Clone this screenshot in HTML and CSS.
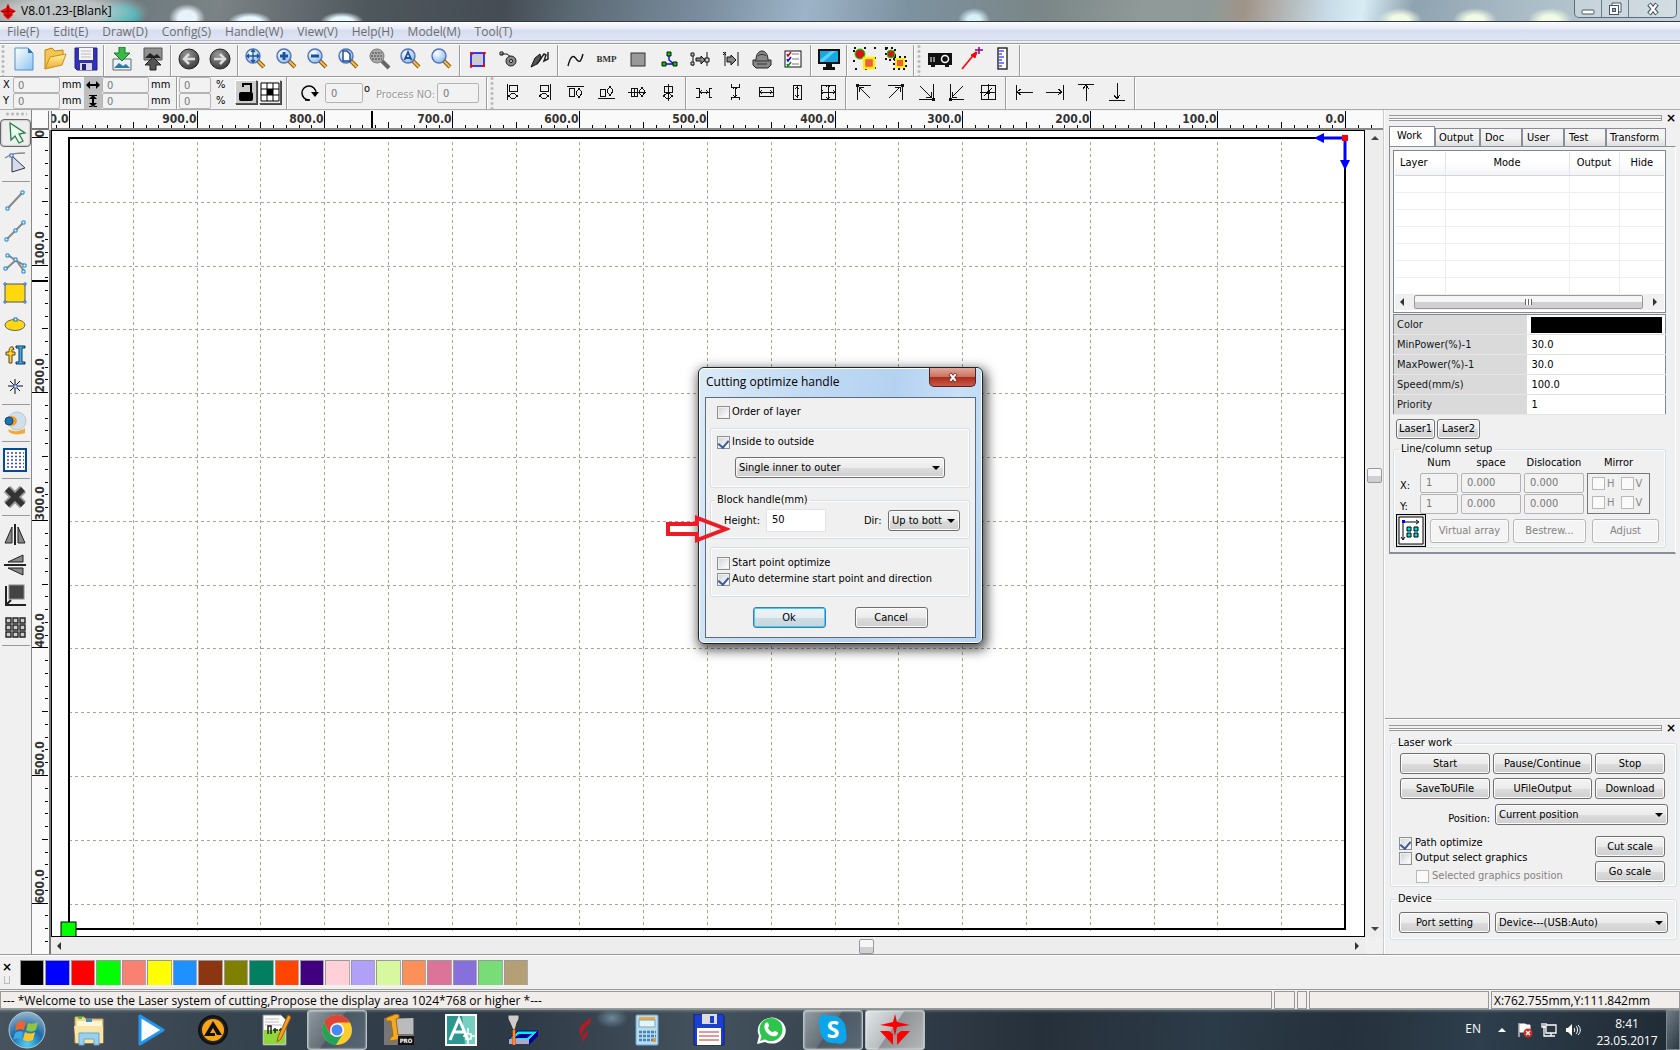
FILE: index.html
```html
<!DOCTYPE html>
<html lang="en">
<head>
<meta charset="utf-8">
<title>V8.01.23-[Blank]</title>
<link rel="stylesheet" href="styles.css">
</head>
<body>
<svg class="defs" aria-hidden="true">
  <defs>
    <radialGradient id="lens" cx=".35" cy=".3" r=".8"><stop offset="0" stop-color="#fff"/><stop offset=".6" stop-color="#b5d4f3"/><stop offset="1" stop-color="#7fb2e6"/></radialGradient>
    <linearGradient id="doc" x1="0" y1="0" x2="1" y2="1"><stop offset="0" stop-color="#fff"/><stop offset="1" stop-color="#8cc4f0"/></linearGradient>
    <linearGradient id="gold" x1="0" y1="0" x2="0" y2="1"><stop offset="0" stop-color="#fff0a0"/><stop offset="1" stop-color="#f0ae2c"/></linearGradient>
    <radialGradient id="orb" cx=".5" cy=".9" r=".9"><stop offset="0" stop-color="#4fd0f8"/><stop offset=".5" stop-color="#1b6aa8"/><stop offset="1" stop-color="#97b6cc"/></radialGradient>
    <radialGradient id="dot" cx=".4" cy=".3" r=".7"><stop offset="0" stop-color="#999"/><stop offset="1" stop-color="#3c3c3c"/></radialGradient>
    <symbol id="mag" viewBox="0 0 24 24"><path d="M13 13l7 7" stroke="#8a5a1c" stroke-width="4"/><path d="M14 14l6 6" stroke="#f6bd45" stroke-width="2"/><circle cx="9" cy="9" r="7" fill="url(#lens)" stroke="#5273b4" stroke-width="1.4"/></symbol>
    <symbol id="laser" viewBox="0 0 32 32"><path d="M16 0l2 8 13 3-13 2-2 9-2-9-13-2 13-3zM1 17h9l4 3v11zM31 17h-9l-4 3v11z" fill="#f00"/></symbol>
  </defs>
</svg>

<header class="titlebar">
  <svg class="logo" viewBox="0 0 32 32"><path d="M16 0l4 9 12 6-7 5v4l-9 8-9-8v-4l-7-5 12-6z" fill="#f00"/><path d="M3 16h26M16 4v24M9 20l6 6M23 20l-6 6" stroke="#400" stroke-width="1.6"/></svg>
  <h1>V8.01.23-[Blank]</h1>
  <div class="winbtns">
    <button aria-label="Minimize"><svg viewBox="0 0 14 14"><rect x="1" y="8" width="12" height="4" rx="1" fill="#fff" stroke="#4a5462"/></svg></button>
    <button aria-label="Restore"><svg viewBox="0 0 14 14"><path d="M4 3V1h9v9h-2" fill="#fff" stroke="#4a5462"/><rect x="1.500" y="3.500" width="9" height="9" fill="#fff" stroke="#4a5462"/><rect x="4.500" y="6.500" width="3" height="3" fill="#9ab" stroke="#4a5462"/></svg></button>
    <button class="wide" aria-label="Close"><svg viewBox="0 0 14 14"><path d="M3 2l8 10M11 2L3 12" stroke="#4a5462" stroke-width="4.600"/><path d="M3.500 2.600l7 8.800M10.500 2.600l-7 8.800" stroke="#fff" stroke-width="2.400"/></svg></button>
  </div>
</header>

<nav class="menubar">
  <a href="#">File(F)</a><a href="#">Edit(E)</a><a href="#">Draw(D)</a><a href="#">Config(S)</a><a href="#">Handle(W)</a><a href="#">View(V)</a><a href="#">Help(H)</a><a href="#">Model(M)</a><a href="#">Tool(T)</a>
</nav>

<div class="toolbar">
  <i class="grip"></i>
  <button aria-label="New"><svg viewBox="0 0 24 24"><path d="M3 1h13l5 5v17H3z" fill="url(#doc)" stroke="#4c8fd0"/><path d="M16 1v5h5z" fill="#2477c8"/></svg></button>
  <button aria-label="Open"><svg viewBox="0 0 24 24"><path d="M2 22V3l7-2 3 3 8-1v5" fill="#f4c650" stroke="#b98416"/><path d="M2 22L7 10l16-3-4 11z" fill="url(#gold)" stroke="#c8901c"/></svg></button>
  <button aria-label="Save"><svg viewBox="0 0 24 24"><path d="M1 1h22v22H3l-2-2z" fill="#3232b4" stroke="#20208a"/><rect x="5" y="1" width="14" height="12" fill="#f4f4fa"/><path d="M7 4h10M7 7h10M7 10h10" stroke="#bbb"/><rect x="6" y="16" width="12" height="7" fill="#d6d6e6"/><rect x="8" y="17" width="4" height="6" fill="#22226e"/></svg></button>
  <i class="sep"></i>
  <button aria-label="Import"><svg viewBox="0 0 24 24"><path d="M3 12h18v11H3z" fill="#e8f2fa" stroke="#666"/><path d="M4 21l5-5 4 3 3-2 4 4z" fill="#2f78a8"/><path d="M9 0h6v6h5l-8 8-8-8h5z" fill="#3cb84a" stroke="#157a26"/></svg></button>
  <button aria-label="Export"><svg viewBox="0 0 24 24"><path d="M3 1h18v12H3z" fill="#909090" stroke="#555"/><path d="M4 11l5-5 4 3 3-2 4 4z" fill="#222"/><path d="M9 23h6v-5h5l-8-8-8 8h5z" fill="#555" stroke="#222"/></svg></button>
  <i class="sep"></i>
  <button aria-label="Back"><svg viewBox="0 0 24 24"><circle cx="12" cy="12" r="10" fill="url(#dot)" stroke="#222"/><path d="M18 12H7m5-5l-5 5 5 5" fill="none" stroke="#ddd" stroke-width="2.500"/></svg></button>
  <button aria-label="Forward"><svg viewBox="0 0 24 24"><circle cx="12" cy="12" r="10" fill="url(#dot)" stroke="#222"/><path d="M6 12h11m-5-5l5 5-5 5" fill="none" stroke="#ddd" stroke-width="2.500"/></svg></button>
  <i class="sep"></i>
  <button aria-label="Pan"><svg viewBox="0 0 24 24"><use href="#mag"/><path d="M9 3v12M3 9h12M7 5l2-2 2 2M7 13l2 2 2-2M5 7L3 9l2 2M13 7l2 2-2 2" fill="none" stroke="#1c4f9c" stroke-width="1.300"/></svg></button>
  <button aria-label="Zoom in"><svg viewBox="0 0 24 24"><use href="#mag"/><path d="M9 5v8M5 9h8" stroke="#1c4f9c" stroke-width="3"/></svg></button>
  <button aria-label="Zoom out"><svg viewBox="0 0 24 24"><use href="#mag"/><path d="M5 9h8" stroke="#1c4f9c" stroke-width="3"/></svg></button>
  <button aria-label="Zoom page"><svg viewBox="0 0 24 24"><use href="#mag"/><path d="M6 4h4l3 3v7H6z" fill="#fff" stroke="#1c4f9c" stroke-width="1.500"/></svg></button>
  <button aria-label="Zoom table"><svg viewBox="0 0 24 24"><path d="M14 14l7 7" stroke="#666" stroke-width="4"/><circle cx="9" cy="9" r="7" fill="#aaa" stroke="#777"/><path d="M4 6h10M3 9h12M4 12h10" stroke="#444" stroke-dasharray="2 1"/></svg></button>
  <button aria-label="Zoom all"><svg viewBox="0 0 24 24"><use href="#mag"/><path d="M5.500 13L9 5l3.500 8M7 11h4" fill="none" stroke="#1c4f9c" stroke-width="1.800"/></svg></button>
  <button aria-label="Zoom selection"><svg viewBox="0 0 24 24"><use href="#mag"/></svg></button>
  <i class="sep"></i>
  <button aria-label="Group"><svg viewBox="0 0 24 24"><rect x="5" y="6" width="13" height="13" fill="#ccc" stroke="#00f" stroke-width="1.500"/><path d="M4 7h3M5 5v3M17 6h3M18 5v3M5 17v4M4 19h3M18 17v3M16 19h3" stroke="#f00" stroke-width="1.500"/></svg></button>
  <button aria-label="Lead in"><svg viewBox="0 0 24 24"><path d="M4 7h6l4 3" stroke="#111" fill="none"/><path d="M3 5h3v3H3z" fill="none" stroke="#111"/><circle cx="14" cy="14" r="5" fill="#888" stroke="#222"/><circle cx="14" cy="14" r="1.500" fill="#eee" stroke="#111"/></svg></button>
  <button aria-label="Measure"><svg viewBox="0 0 24 24"><path d="M3 20l4-9 5-4 1 5-4 5z" fill="#555" stroke="#111"/><path d="M9 17l7-10 2 1-2 6 4-2V5" fill="none" stroke="#222" stroke-width="1.500"/></svg></button>
  <i class="sep"></i>
  <button aria-label="Smooth"><svg viewBox="0 0 24 24"><path d="M4 19c3-12 6-11 9-6 3 3 4 1 6-6" fill="none" stroke="#111" stroke-width="1.400"/></svg></button>
  <button aria-label="Bitmap"><span class="bmp">BMP</span></button>
  <button aria-label="Fill"><svg viewBox="0 0 24 24"><rect x="5" y="6" width="14" height="13" fill="#999" stroke="#333"/></svg></button>
  <button aria-label="Join"><svg viewBox="0 0 24 24"><path d="M12 8v5l5 4H7" fill="none" stroke="#00f" stroke-width="1.400"/><path d="M10 5h4v4h-4zM5 15h4v4H5zM16 15h4v4h-4z" fill="#0c0" stroke="#111"/></svg></button>
  <button aria-label="Gap"><svg viewBox="0 0 24 24"><path d="M5 7v12M19 5v14M9 12h10" stroke="#111"/><path d="M3 6h3v3H3zM3 15h3v3H3zM17 11h4v4h-4z" fill="#ccc" stroke="#111"/><path d="M8 11h5V9l4 4-4 4v-3H8z" fill="#888" stroke="#111"/></svg></button>
  <button aria-label="Offset"><svg viewBox="0 0 24 24"><path d="M6 5v14M19 5v14" stroke="#111"/><path d="M4 5l3 3M7 5L4 8" stroke="#111"/><path d="M8 10h4V8l5 5-5 5v-3H8z" fill="#888" stroke="#111"/></svg></button>
  <button aria-label="Simulate"><svg viewBox="0 0 24 24"><path d="M6 13c0-12 12-12 12 0h3v5l-3 3H6l-3-3v-5z" fill="#888" stroke="#222"/><path d="M8 9c2-2 6-2 8 0M5 14h14M7 17h10" stroke="#333" fill="none"/></svg></button>
  <button aria-label="Checklist"><svg viewBox="0 0 24 24"><rect x="4" y="4" width="16" height="16" fill="#fff" stroke="#111"/><path d="M11 7h7M11 12h7M11 17h7" stroke="#777"/><path d="M6 7l1 2 3-4" stroke="#c00" fill="none" stroke-width="1.500"/><path d="M6 12l1 2 3-4" stroke="#00f" fill="none" stroke-width="1.500"/><path d="M6 17l1 2 3-4" stroke="#080" fill="none" stroke-width="1.500"/></svg></button>
  <i class="sep"></i>
  <button aria-label="Preview"><svg viewBox="0 0 24 24"><path d="M1 2h22v15H1zM9 17h6v3h3v3H6v-3h3z" fill="#111"/><rect x="3" y="4" width="18" height="11" fill="#18a8e0"/><path d="M3 13L14 4h5L6 15H3z" fill="#5cd0f4"/></svg></button>
  <i class="sep"></i>
  <button aria-label="Group objects"><svg viewBox="0 0 24 24"><path d="M1 1h21v21H1z" fill="none" stroke="#111" stroke-width="2" stroke-dasharray="2 8"/><circle cx="7" cy="7" r="5" fill="#d01818" stroke="#0d0"/><rect x="11" y="11" width="10" height="10" fill="#f25a4a" stroke="#fe0" stroke-width="2.500"/></svg></button>
  <button aria-label="Ungroup objects"><svg viewBox="0 0 24 24"><path d="M2 1h9v12H2zM10 10h12v12H10z" fill="none" stroke="#111" stroke-width="2" stroke-dasharray="2 3"/><circle cx="7" cy="7" r="4" fill="#d01818" stroke="#0d0"/><rect x="12" y="12" width="8" height="8" fill="#f25a4a" stroke="#fe0" stroke-width="2"/></svg></button>
  <i class="sep"></i>
  <i class="grip"></i>
  <button aria-label="Projector"><svg viewBox="0 0 24 24"><path d="M0 6h24v12h-3v2h-4v-2H7v2H3v-2H0z" fill="#111"/><circle cx="17" cy="12" r="3.500" fill="none" stroke="#fff" stroke-width="1.500"/><path d="M3 10v5M6 10v5" stroke="#fff"/></svg></button>
  <button aria-label="Pointer"><svg viewBox="0 0 24 24"><path d="M3 22L17 5" stroke="#f00" stroke-width="1.600"/><path d="M18 5l-6 3 4 3z" fill="#f00" stroke="#f00"/><path d="M20 0v7M16 3h8" stroke="#808" stroke-width="1.500"/></svg></button>
  <button aria-label="Ruler"><svg viewBox="0 0 24 24"><rect x="8" y="1" width="9" height="21" fill="#fff" stroke="#111" stroke-width="1.300"/><path d="M9 4h5M9 7h3M9 10h5M9 13h3M9 16h5M9 19h3" stroke="#00f"/></svg></button>
  <i class="sep"></i>
</div>

<div class="toolbar fields">
  <div class="pair xy">
    <label for="px">X</label><input id="px" value="0"><span>mm</span>
    <label for="py">Y</label><input id="py" value="0"><span>mm</span>
  </div>
  <div class="pair size">
    <label class="dark" for="pw" aria-label="Width"><svg viewBox="0 0 16 14"><path d="M2 7h12" stroke="#000" stroke-width="2"/><path d="M1 7l4-4v8zM15 7l-4-4v8z"/></svg></label><input id="pw" value="0"><span>mm</span>
    <label class="dark" for="ph" aria-label="Height"><svg viewBox="0 0 16 14"><path d="M8 2v10" stroke="#000" stroke-width="2"/><path d="M4 1h8v1H4zM4 12h8v1H4zM8 1l4 4H4zM8 13l4-4H4z"/></svg></label><input id="ph" value="0"><span>mm</span>
  </div>
  <i class="sep"></i>
  <div class="pair pct">
    <input aria-label="Width percent" value="0"><span>%</span>
    <input aria-label="Height percent" value="0"><span>%</span>
  </div>
  <div class="locks">
    <button class="raised pressed" aria-label="Lock ratio"><svg viewBox="0 0 20 20"><path d="M7 5V2h8v8" fill="none" stroke="#000" stroke-width="2"/><rect x="3" y="10" width="14" height="9" rx="2"/></svg></button>
    <button class="raised" aria-label="Anchor"><svg viewBox="0 0 20 20"><path d="M1 1h18v18H1zM7 1v18M13 1v18M1 7h18M1 13h18" fill="#fff" stroke="#000"/><rect x="7" y="7" width="6" height="6"/></svg></button>
  </div>
  <i class="sep"></i>
  <div class="rot">
    <svg viewBox="0 0 20 20"><path d="M10 17a7 7 0 1 1 7-7" fill="none" stroke="#000" stroke-width="1.500"/><path d="M6 17h5" stroke="#000" stroke-width="1.500"/><path d="M12 9h8l-4 5z"/></svg>
    <input id="ang" aria-label="Angle" value="0"><span class="deg">o</span>
    <label class="faint" for="proc">Process NO:</label><input id="proc" value="0">
  </div>
  <i class="sep"></i>
  <i class="grip"></i>
  <button aria-label="Align left"><svg viewBox="0 0 24 24"><path d="M6 4v16M8 5h8v6H8zM7 16l5-3 5 3-5 3z"/></svg></button>
  <button aria-label="Align right"><svg viewBox="0 0 24 24"><path d="M18 4v16M8 5h8v6H8zM7 16l5-3 5 3-5 3z"/></svg></button>
  <button aria-label="Align top"><svg viewBox="0 0 24 24"><path d="M4 6h17M6 8h5v8H6zM16 8l3 5-3 5-3-5z"/></svg></button>
  <button aria-label="Align bottom"><svg viewBox="0 0 24 24"><path d="M4 18h17M6 9h5v7H6zM16 6l3 5-3 5-3-5z"/></svg></button>
  <button aria-label="Align horizontal centers"><svg viewBox="0 0 24 24"><path d="M3 12h18M6 8h6v8H6zM9 8v8M17 7l3 5-3 5-3-5z"/></svg></button>
  <button aria-label="Align vertical centers"><svg viewBox="0 0 24 24"><path d="M12 4v17M8 6h8v6H8zM7 16l5-3 5 3-5 3z"/></svg></button>
  <i class="sep"></i>
  <button aria-label="Space horizontally"><svg viewBox="0 0 24 24"><path d="M4 8h3v9H4M20 8h-3v9h3M7 12h10M10 10l-2 2 2 2M14 10l2 2-2 2"/></svg></button>
  <button aria-label="Space vertically"><svg viewBox="0 0 24 24"><path d="M8 4v3h8V4M8 20v-3h8v3M12 7v10M10 9l2-2 2 2M10 15l2 2 2-2"/></svg></button>
  <button aria-label="Same width"><svg viewBox="0 0 24 24"><path d="M5 7h14v9H5zM5 12h14M8 10l-2 2 2 2M16 10l2 2-2 2"/></svg></button>
  <button aria-label="Same height"><svg viewBox="0 0 24 24"><path d="M8 5h8v14H8zM12 6v12M10 9l2-2 2 2M10 15l2 2 2-2"/></svg></button>
  <button aria-label="Same size"><svg viewBox="0 0 24 24"><path d="M5 5h14v14H5zM12 5v14M5 12h14M10 7l2-2 2 2M10 17l2 2 2-2M7 10l-2 2 2 2M17 10l2 2-2 2"/></svg></button>
  <i class="sep"></i>
  <button aria-label="Top left"><svg viewBox="0 0 24 24"><path d="M5 20V5h14M18 18L7 7M7 12V7h5M4 4h2v2H4z"/></svg></button>
  <button aria-label="Top right"><svg viewBox="0 0 24 24"><path d="M19 20V5H5M6 18L17 7M12 7h5v5M18 4h2v2h-2z"/></svg></button>
  <button aria-label="Bottom right"><svg viewBox="0 0 24 24"><path d="M19 4v15H5M6 6l11 11M12 17h5v-5M18 18h2v2h-2z"/></svg></button>
  <button aria-label="Bottom left"><svg viewBox="0 0 24 24"><path d="M5 4v15h14M18 6L7 17M7 12v5h5M4 18h2v2H4z"/></svg></button>
  <button aria-label="Center"><svg viewBox="0 0 24 24"><path d="M5 5h14v14H5zM12 4v16M4 12h16M8 16l8-8M11 11h2v2h-2z"/></svg></button>
  <i class="sep"></i>
  <button aria-label="Move left"><svg viewBox="0 0 24 24"><path d="M4 5v15M5 12h16M9 9l-4 3 4 3"/></svg></button>
  <button aria-label="Move right"><svg viewBox="0 0 24 24"><path d="M20 5v15M19 12H3M15 9l4 3-4 3"/></svg></button>
  <button aria-label="Move top"><svg viewBox="0 0 24 24"><path d="M4 4h16M12 5v16M9 9l3-4 3 4"/></svg></button>
  <button aria-label="Move bottom"><svg viewBox="0 0 24 24"><path d="M4 20h16M12 19V3M9 15l3 4 3-4"/></svg></button>
  <i class="sep"></i>
</div>

<main class="work">
  <aside class="tools">
    <i class="hgrip"></i>
    <button class="on" aria-label="Select"><svg viewBox="0 0 24 24"><path d="M7 2l1 17 4-4 4 7 4-2-4-7 6-1z" fill="#e8fff0" stroke="#2a7a4a" stroke-width="1.300"/></svg></button>
    <button aria-label="Edit node"><svg viewBox="0 0 24 24"><path d="M2 7c7-5 12-5 20-5" fill="none" stroke="#888" stroke-width="1.500"/><path d="M9 5v16l13-4z" fill="#d4dcf4" stroke="#333"/><rect x="7" y="3" width="3" height="3" fill="#fff" stroke="#36c"/></svg></button>
    <hr>
    <button aria-label="Line"><svg viewBox="0 0 24 24"><path d="M5 20L19 5" stroke="#888" stroke-width="2"/><path d="M3 19h3v3H3zM18 3h3v3h-3z" fill="#fff" stroke="#0a84c8"/></svg></button>
    <button aria-label="Polyline"><svg viewBox="0 0 24 24"><path d="M4 20L20 4" stroke="#888" stroke-width="2"/><path d="M2 19h3v3H2zM11 10h3v3h-3zM19 2h3v3h-3z" fill="#fff" stroke="#0a84c8"/></svg></button>
    <button aria-label="Bezier"><svg viewBox="0 0 24 24"><path d="M3 19l10-9 8 11M5 5l7 5 9 5" fill="none" stroke="#888" stroke-width="2"/><path d="M1 17h3v3H1zM3 4h3v3H3zM11 8h3v3h-3zM20 14h3v3h-3zM19 20h3v3h-3z" fill="#fff" stroke="#0a84c8"/></svg></button>
    <button aria-label="Rectangle"><svg viewBox="0 0 24 24"><rect x="2" y="3" width="20" height="18" fill="#ffd810" stroke="#555"/><path d="M1 2h2v2H1zM21 2h2v2h-2zM1 20h2v2H1zM21 20h2v2h-2z" fill="#fff" stroke="#36c"/></svg></button>
    <button aria-label="Ellipse"><svg viewBox="0 0 24 24"><ellipse cx="12" cy="13" rx="10" ry="5.500" fill="#ffd810" stroke="#666"/><rect x="11" y="6" width="3" height="3" fill="#fff" stroke="#07c"/></svg></button>
    <button aria-label="Text"><svg viewBox="0 0 24 24"><path d="M10 4C6 3 6 7 6 9H3v3h3v8h3v-8h3V9H9c0-3 0-3 2-2z" fill="#ffd020" stroke="#543"/><path d="M13 3h9v2h-3v14h3v2h-9v-2h3V5h-3z" fill="#38b0f0" stroke="#135"/></svg></button>
    <button aria-label="Point"><svg viewBox="0 0 24 24"><path d="M12 5v15M5 12h15M7 7l10 10M17 7L7 17" stroke="#111"/><rect x="11" y="11" width="3" height="3" fill="#fff" stroke="#36c"/></svg></button>
    <hr>
    <button aria-label="Camera"><svg viewBox="0 0 24 24"><path d="M5 18c5 3 12 3 17-1v5c-5 2-13 2-16-1z" fill="#f4a838"/><circle cx="14" cy="10" r="9" fill="#d0dfea" stroke="#b8c4cc"/><ellipse cx="8" cy="10" rx="6" ry="5" fill="#f39a25"/><ellipse cx="6" cy="10" rx="4" ry="4" fill="#1873b8" stroke="#0d4a80"/></svg></button>
    <hr>
    <button aria-label="Array grid"><svg viewBox="0 0 24 24"><rect x="1" y="1" width="22" height="22" fill="#fff" stroke="#024a94" stroke-width="2"/><path d="M4 5h17M4 8.500h17M4 12h17M4 15.500h17M4 19h17" stroke="#34c" stroke-width="1.500" stroke-dasharray="2 2"/></svg></button>
    <hr>
    <button aria-label="Delete"><svg viewBox="0 0 24 24"><path d="M4 4l16 16M20 4L4 20" stroke="#999" stroke-width="9"/><path d="M4 4l16 16M20 4L4 20" stroke="#333" stroke-width="5.500"/></svg></button>
    <hr>
    <button aria-label="Mirror horizontally"><svg viewBox="0 0 24 24"><path d="M12 2v21" stroke="#222" stroke-width="2"/><path d="M9 5v16H2zM15 5v16h7z" fill="#888" stroke="#222"/></svg></button>
    <button aria-label="Mirror vertically"><svg viewBox="0 0 24 24"><path d="M1 12h22" stroke="#222" stroke-width="2"/><path d="M20 9V2L5 9zM20 15v7L5 15z" fill="#888" stroke="#222"/></svg></button>
    <button aria-label="Dock"><svg viewBox="0 0 24 24"><rect x="6" y="1" width="15" height="14" fill="#444" stroke="#888"/><path d="M3 2v19h20M3 21l5-5" fill="none" stroke="#222" stroke-width="2"/></svg></button>
    <button aria-label="Array"><svg viewBox="0 0 24 24"><path d="M3 3h5v5H3zM10 3h5v5h-5zM17 3h5v5h-5zM3 10h5v5H3zM10 10h5v5h-5zM17 10h5v5h-5zM3 17h5v5H3zM10 17h5v5h-5zM17 17h5v5h-5z" fill="#ccc" stroke="#222" stroke-width="1.400"/></svg></button>
    <hr>
  </aside>

  <section class="editor">
    <div class="corner"></div>
    <svg class="hruler" id="hruler"></svg>
    <svg class="vruler" id="vruler"></svg>
    <svg class="canvas" id="canvas"></svg>
    <div class="vscroll"><i class="up"></i><i class="thumb"></i><i class="down"></i></div>
    <div class="hscroll"><i class="left"></i><i class="thumb"></i><i class="right"></i></div>
  </section>

  <aside class="side">
    <section class="dock first">
      <div class="dockbar"><i></i><button aria-label="Close panel">×</button></div>
      <div class="tabs"><button class="on">Work</button><button>Output</button><button>Doc</button><button>User</button><button>Test</button><button class="wide">Transform</button></div>
      <div class="page">
        <div class="listbox">
          <table>
            <thead><tr><th class="c1">Layer</th><th>Mode</th><th class="c3">Output</th><th class="c4">Hide</th></tr></thead>
            <tbody><tr><td></td><td></td><td></td><td></td></tr><tr><td></td><td></td><td></td><td></td></tr><tr><td></td><td></td><td></td><td></td></tr><tr><td></td><td></td><td></td><td></td></tr><tr><td></td><td></td><td></td><td></td></tr><tr><td></td><td></td><td></td><td></td></tr><tr><td></td><td></td><td></td><td></td></tr></tbody>
          </table>
          <div class="lscroll"><i class="left"></i><i class="thumb"><b></b></i><i class="right"></i></div>
        </div>
        <table class="props">
          <tr><th>Color</th><td><i class="black"></i></td></tr>
          <tr><th>MinPower(%)-1</th><td>30.0</td></tr>
          <tr><th>MaxPower(%)-1</th><td>30.0</td></tr>
          <tr><th>Speed(mm/s)</th><td>100.0</td></tr>
          <tr><th>Priority</th><td>1</td></tr>
        </table>
        <div class="lasers"><button class="btn">Laser1</button><button class="btn">Laser2</button></div>
        <fieldset class="setup">
          <legend>Line/column setup</legend>
          <div class="setgrid">
            <span></span><span>Num</span><span>space</span><span>Dislocation</span><span>Mirror</span>
            <label for="nx">X:</label><input id="nx" value="1" disabled><input aria-label="Space X" value="0.000" disabled><input aria-label="Dislocation X" value="0.000" disabled>
            <div class="mirror"><label><input type="checkbox" disabled>H</label><label><input type="checkbox" disabled>V</label><label><input type="checkbox" disabled>H</label><label><input type="checkbox" disabled>V</label></div>
            <label for="ny">Y:</label><input id="ny" value="1" disabled><input aria-label="Space Y" value="0.000" disabled><input aria-label="Dislocation Y" value="0.000" disabled>
          </div>
          <div class="arr">
            <button class="arricon" aria-label="Array direction"><svg viewBox="0 0 28 31"><path d="M2 2h24v27H2z" fill="#fff" stroke="#000"/><path d="M6 7v17M6 7h15M4 22l2 3 2-3M19 5l3 2-3 2" stroke="#000" fill="none"/><path d="M5 5h3v3H5z" fill="#00f"/><path d="M10 12h4v4h-4zM17 12h4v4h-4zM10 18h4v4h-4zM17 18h4v4h-4z" fill="#0dd" stroke="#000"/></svg></button>
            <button class="btn v" disabled>Virtual array</button><button class="btn b" disabled>Bestrew...</button><button class="btn a" disabled>Adjust</button>
          </div>
        </fieldset>
      </div>
    </section>
    <section class="dock second">
      <div class="dockbar"><i></i><button aria-label="Close panel">×</button></div>
      <fieldset class="lw">
        <legend>Laser work</legend>
        <div class="lwgrid">
          <button class="btn">Start</button><button class="btn">Pause/Continue</button><button class="btn">Stop</button>
          <button class="btn">SaveToUFile</button><button class="btn">UFileOutput</button><button class="btn">Download</button>
        </div>
        <div class="posrow"><label for="pos">Position:</label><span class="sel"><select id="pos"><option>Current position</option></select></span></div>
        <div class="optrow">
          <div class="checks">
            <label><input type="checkbox" checked>Path optimize</label>
            <label><input type="checkbox">Output select graphics</label>
            <label class="off"><input type="checkbox" disabled>Selected graphics position</label>
          </div>
          <div class="scales"><button class="btn">Cut scale</button><button class="btn">Go scale</button></div>
        </div>
      </fieldset>
      <fieldset class="dev">
        <legend>Device</legend>
        <div class="devrow"><button class="btn">Port setting</button><span class="sel"><select aria-label="Device"><option>Device---(USB:Auto)</option></select></span></div>
      </fieldset>
    </section>
  </aside>
</main>

<div class="palette">
  <div class="pgrip"><button aria-label="Close palette">×</button><i></i></div>
  <div class="swatches">
    <button class="k0" aria-label="Layer 1"></button><button class="k1" aria-label="Layer 2"></button><button class="k2" aria-label="Layer 3"></button><button class="k3" aria-label="Layer 4"></button><button class="k4" aria-label="Layer 5"></button><button class="k5" aria-label="Layer 6"></button><button class="k6" aria-label="Layer 7"></button><button class="k7" aria-label="Layer 8"></button><button class="k8" aria-label="Layer 9"></button><button class="k9" aria-label="Layer 10"></button><button class="k10" aria-label="Layer 11"></button><button class="k11" aria-label="Layer 12"></button><button class="k12" aria-label="Layer 13"></button><button class="k13" aria-label="Layer 14"></button><button class="k14" aria-label="Layer 15"></button><button class="k15" aria-label="Layer 16"></button><button class="k16" aria-label="Layer 17"></button><button class="k17" aria-label="Layer 18"></button><button class="k18" aria-label="Layer 19"></button><button class="k19" aria-label="Layer 20"></button>
  </div>
</div>

<footer class="status"><span class="msg">--- *Welcome to use the Laser system of cutting,Propose the display area 1024*768 or higher *---</span><span class="s2"></span><span class="s3"></span><span class="s4"></span><span class="s5">X:762.755mm,Y:111.842mm</span></footer>

<div class="taskbar">
  <button class="orb" aria-label="Start menu"><svg viewBox="0 0 40 40"><circle cx="20" cy="20" r="18" fill="url(#orb)" stroke="#b4cad8"/><path d="M10 13c3-3 6-2 9-1l-2 8c-3-1-6-1-9 1z" fill="#f0632a"/><path d="M21 13c3 1 6 1 10-1l-2 8c-4 2-7 2-10 0z" fill="#8cc63e"/><path d="M8 23c3-2 6-2 8-1l-2 7c-3-1-5-1-8 1z" fill="#3fa9e8"/><path d="M18 22c3 2 6 2 10 0l-2 8c-4 2-7 1-10 0z" fill="#fbc32e"/></svg></button>
  <button aria-label="Explorer"><svg viewBox="0 0 32 32"><path d="M2 3h9l2 2h17v24H2z" fill="#f4d98a" stroke="#c9a64a"/><path d="M4 7h25v5H4z" fill="#fff6d8"/><path d="M13 5h6v3h-6z" fill="#3a8ed8"/><path d="M5 3h4v2H5z" fill="#3c4"/><path d="M1 12h29v17H3z" fill="#f8e4a4"/><path d="M6 31V19h20v12h-5v-6H11v6z" fill="#9ad0ee" stroke="#62a8d0"/></svg></button>
  <button aria-label="Player"><svg viewBox="0 0 32 32"><path d="M5 2l23 14L5 30z" fill="#fff" stroke="#2196f3" stroke-width="3" stroke-linejoin="round"/></svg></button>
  <button aria-label="AIMP"><svg viewBox="0 0 32 32"><circle cx="16" cy="16" r="14" fill="#222" stroke="#111" stroke-width="2"/><circle cx="16" cy="16" r="11" fill="#f9a51a"/><path d="M16 7l9 14h-5l-4-7-3 5h5v3H7z" fill="#111"/></svg></button>
  <button aria-label="Notepad++"><svg viewBox="0 0 32 32"><path d="M4 1h18l5 5v25H4z" fill="#fff" stroke="#888"/><path d="M5 16h21v14H5z" fill="#8ed63c"/><path d="M6 5h14M6 8h14M6 11h17" stroke="#bbb"/><path d="M9 20v-8h3v8M14 16h5M16 14v5M20 16h5M22 14v5" stroke="#222" fill="none" stroke-width="1.500"/><path d="M29 1l3 2-10 22-4 3 1-5z" fill="#f4a020" stroke="#a05a10"/></svg></button>
  <button class="on" aria-label="Chrome"><svg viewBox="0 0 32 32"><circle cx="16" cy="16" r="15" fill="#fbcd2f"/><path d="M3 8.500A15 15 0 0 1 29 8.500H16L9 20z" fill="#e04434"/><path d="M3 8.500A15 15 0 0 0 15 31l7-11.500-6 3.500-7-3z" fill="#25a35a"/><circle cx="16" cy="16" r="7" fill="#fff"/><circle cx="16" cy="16" r="5.500" fill="#4688f4"/></svg></button>
  <button aria-label="Inventor"><svg viewBox="0 0 32 32"><path d="M1 4h30v27H1z" fill="#777"/><path d="M14 5l16-1v16H12z" fill="#bbb"/><path d="M3 4l10-4 3 1v3l-3 1 2 16 4 1v3L7 27v-3l3-2L8 7H3z" fill="#f0aa24" stroke="#a86a10"/><path d="M15 22h16v9H15z" fill="#111"/><text x="23" y="29" class="pro">PRO</text></svg></button>
  <button aria-label="AutoCAD"><svg viewBox="0 0 32 32"><rect x="1" y="1" width="30" height="30" fill="#2a9890" stroke="#fff" stroke-width="2"/><path d="M17 2h13v28H20z" fill="#77cfc4"/><path d="M5 26l9-21 9 21M8 18h12" stroke="#fff" stroke-width="3" fill="none"/><path d="M23 14v6M23 25v5M18 22h3M26 22h5M21 20h5v5h-5z" stroke="#fff" fill="none" stroke-width="1.500"/></svg></button>
  <button aria-label="Laser cut"><svg viewBox="0 0 32 32"><path d="M2 25l9-8h20l-9 9z" fill="#0ee" stroke="#008"/><path d="M2 25h20v5H2z" fill="#aac"/><path d="M22 26l9-9v5l-9 9z" fill="#009"/><path d="M7 24l5-4h13l-5 4z" fill="#009"/><path d="M1 1h11v4l-2 4-2 7H6L3 9 1 5z" fill="#ccc" stroke="#333"/><path d="M7 16v15" stroke="#f22" stroke-width="3"/><path d="M7 16v15" stroke="#ff0"/></svg></button>
  <button aria-label="Flame"><svg viewBox="0 0 32 32"><path d="M22 2c0 9-3 9-7 13-2 3-2 5-2 8-4-5-3-9 1-13 3-3 6-4 8-8zM19 16c0 6-2 8-5 10v4c-2-5-1-9 2-11z" fill="#b41a24"/></svg></button>
  <button aria-label="Calculator"><svg viewBox="0 0 32 32"><rect x="5" y="1" width="22" height="30" rx="1" fill="#b8dcf2" stroke="#6aa5cc"/><rect x="8" y="3" width="16" height="3" fill="#f6a63c"/><rect x="8" y="6" width="16" height="7" fill="#e4f2fa" stroke="#7aa"/><path d="M8 18h17M8 22h17M8 26h17" stroke="#4a80b0" stroke-width="2.500" stroke-dasharray="3 1"/><path d="M22 24h3v4h-3z" fill="#f09030"/></svg></button>
  <button aria-label="Backup"><svg viewBox="0 0 32 32"><path d="M1 0h28l2 2v29H1z" fill="#1c3fd0" stroke="#0a1e80"/><path d="M9 0h15v10H9z" fill="#ddd"/><path d="M17 2h4v7h-4z" fill="#1c3fd0"/><path d="M4 14h24v17H4z" fill="#fff"/><path d="M6 18h20M6 22h20M6 26h20" stroke="#c33"/></svg></button>
  <button aria-label="WhatsApp"><svg viewBox="0 0 32 32"><path d="M2 30l2-8a14 13 0 1 1 6 6z" fill="#fff"/><circle cx="16" cy="15.500" r="11.500" fill="#2cc64c"/><path d="M5 27l2-6 4 4z" fill="#2cc64c"/><path d="M10 10c2-3 4-1 4 2l-1 2c1 2 3 4 5 4l2-1c4 1 4 3 1 5-6 2-14-6-11-12z" fill="#fff"/></svg></button>
  <button class="on" aria-label="Skype"><svg viewBox="0 0 32 32"><path d="M3 3c3-3 7-2 9-1 10-2 18 6 17 17 3 8-4 13-9 10C10 31 2 23 3 13 1 10 1 6 3 3z" fill="#0aa5ea"/><text x="16" y="24" class="sk">S</text></svg></button>
  <button class="on bright" aria-label="Laser editor"><svg viewBox="0 0 32 32"><use href="#laser"/></svg></button>
  <div class="tray">
    <span class="lang">EN</span>
    <svg viewBox="0 0 10 10"><path d="M1 7l4-4 4 4z" fill="#fff"/></svg>
    <svg class="t" viewBox="0 0 16 16"><path d="M2 1v14M3 2h5l2 1h3v7H3z" fill="#fff" stroke="#fff"/><circle cx="11" cy="11" r="4.500" fill="#d42a1e"/><path d="M9 9l4 4M13 9l-4 4" stroke="#fff" stroke-width="1.500"/></svg>
    <svg class="t" viewBox="0 0 16 16"><path d="M5 3h10v8H5zM10 11v3M6 14h8M3 1v5M1 1v4h4V1M3 5v9h3" fill="none" stroke="#fff" stroke-width="1.300"/></svg>
    <svg class="t" viewBox="0 0 16 16"><path d="M1 6h2l4-4v12l-4-4H1z" fill="#fff"/><path d="M9 6c1 1 1 3 0 4M11 4c2 2 2 6 0 8M13 3c3 3 3 7 0 10" fill="none" stroke="#fff"/></svg>
    <div class="clock"><span>8:41</span><span>23.05.2017</span></div>
    <button class="peek" aria-label="Show desktop"></button>
  </div>
</div>

<div class="dialog" role="dialog" aria-label="Cutting optimize handle">
  <div class="dtitle"><h2>Cutting optimize handle</h2><button class="dclose" aria-label="Close dialog"><svg viewBox="0 0 14 14"><path d="M3 2l8 10M11 2L3 12" stroke="#6a3030" stroke-width="4.600"/><path d="M3.500 2.600l7 8.800M10.500 2.600l-7 8.800" stroke="#fff" stroke-width="2.600"/></svg></button></div>
  <div class="dbody">
    <label class="order"><input type="checkbox">Order of layer</label>
    <fieldset class="g1">
      <label><input type="checkbox" checked>Inside to outside</label>
      <span class="sel"><select aria-label="Inside mode"><option>Single inner to outer</option></select></span>
    </fieldset>
    <fieldset class="g2">
      <legend>Block handle(mm)</legend>
      <div class="hrow"><label for="hgt">Height:</label><input id="hgt" value="50"><label class="dir" for="dir">Dir:</label><span class="sel"><select id="dir"><option>Up to bott</option></select></span></div>
    </fieldset>
    <fieldset class="g3">
      <label><input type="checkbox">Start point optimize</label>
      <label><input type="checkbox" checked>Auto determine start point and direction</label>
    </fieldset>
    <div class="dbtns"><button class="btn ok">Ok</button><button class="btn">Cancel</button></div>
  </div>
  <svg class="redarrow" viewBox="0 0 64 28"><path d="M2 9h29V3l29 11-29 11v-6H2z" fill="none" stroke="#ed1c24" stroke-width="4"/></svg>
</div>
<script src="ruler.js"></script>
</body>
</html>
```

FILE: ruler.js
```js
// Draws the rulers and the work-table grid. 1000 mm spans 1276 px.
const MM = 1.276;
const NS = 'http://www.w3.org/2000/svg';
function add(parent, name, attrs, text) {
  const el = document.createElementNS(NS, name);
  for (const k in attrs) el.setAttribute(k, attrs[k]);
  if (text) el.textContent = text;
  parent.appendChild(el);
  return el;
}
const left = 17, right = 1293, top0 = 7, bottom = 798;

const h = document.getElementById('hruler');
for (let mm = -50; mm <= 1010; mm += 10) {
  const x = Math.round(right - mm * MM) + 0.5;
  const len = mm % 100 === 0 ? 17 : mm % 50 === 0 ? 6 : 3;
  add(h, 'path', { d: `M${x} ${17 - len}V17`, class: 'tick' });
  if (mm % 100 === 0) add(h, 'text', { x: x - 1, y: 12, class: 'num end' }, mm === 1000 ? '0.0' : mm.toFixed(1));
}
add(h, 'path', { d: 'M320 0V17', class: 'mark' });

const v = document.getElementById('vruler');
for (let mm = 0; mm <= 640; mm += 10) {
  const y = Math.round(top0 + mm * MM) + 0.5;
  const len = mm % 100 === 0 ? 16 : mm % 50 === 0 ? 6 : 3;
  add(v, 'path', { d: `M${16 - len} ${y}H16`, class: 'tick' });
  if (mm % 100 === 0) add(v, 'text', { transform: `translate(12 ${y}) rotate(-90)`, class: 'num' }, mm ? mm.toFixed(1) : '0');
}
add(v, 'path', { d: 'M0 151H16', class: 'mark' });

const c = document.getElementById('canvas');
for (let mm = 50; mm < 1000; mm += 50) {
  const x = Math.round(right - mm * MM) + 0.5;
  add(c, 'path', { d: `M${x} ${top0 + 4}V${bottom + 2}`, class: 'grid' });
}
for (let mm = 50; mm < 620; mm += 50) {
  const y = Math.round(top0 + mm * MM) + 0.5;
  add(c, 'path', { d: `M${left} ${y}H${right}`, class: 'grid' });
}
add(c, 'rect', { x: left, y: top0, width: right - left, height: bottom - top0, class: 'frame' });
add(c, 'path', { d: `M${right} ${top0}h-22M${right} ${top0}v22`, class: 'axis' });
add(c, 'path', { d: `M${right - 31} ${top0}l10 -5v10zM${right} ${top0 + 32}l-5 -10h10z`, class: 'head' });
add(c, 'rect', { x: right - 3, y: top0 - 3, width: 6, height: 6, fill: '#f00' });
add(c, 'rect', { x: left - 8, y: bottom - 7, width: 15, height: 15, fill: '#0f0', stroke: '#000' });
```

FILE: styles.css
```css
* { box-sizing: border-box; }
body {
  margin: 0; height: 100vh; display: flex; flex-direction: column; overflow: hidden; position: relative;
  background: #f0f0f0; color: #000; font: 11px/14px "DejaVu Sans Condensed", "DejaVu Sans", sans-serif;
}
h1, h2, fieldset, legend, hr { margin: 0; padding: 0; border: 0; font-weight: 400; }
button, input, select { font: inherit; color: inherit; margin: 0; padding: 0; min-width: 0; border-radius: 0; }
button { background: none; border: 0; }
.defs { position: absolute; width: 0; height: 0; }

/* title bar */
.titlebar {
  height: 22px; flex: none; display: flex; align-items: flex-start; border-bottom: 1px solid #333b40;
  background:
    radial-gradient(ellipse 90px 24px at 60px 12px, #c8ccccdd 50%, #c8cccc00),
    radial-gradient(ellipse 26px 16px at 120px 16px, #2fb0b4 50%, #2fb0b400),
    radial-gradient(ellipse 18px 14px at 187px 18px, #e8f2fa 50%, #e8f2fa00),
    radial-gradient(ellipse 22px 10px at 250px 22px, #e8f8ff 50%, #e8f8ff00),
    radial-gradient(ellipse 22px 10px at 342px 22px, #e8f8ff 50%, #e8f8ff00),
    radial-gradient(ellipse 16px 12px at 974px 20px, #d8f0f8 40%, #d8f0f800),
    radial-gradient(ellipse 22px 12px at 1400px 20px, #f0fae4 40%, #f0fae400),
    radial-gradient(ellipse 22px 12px at 1475px 20px, #f0fae4 40%, #f0fae400),
    radial-gradient(ellipse 22px 12px at 1550px 20px, #f0fae4 40%, #f0fae400),
    linear-gradient(100deg, #8d9494 0, #6d7b7e 8%, #7b8386 13%, #4e575c 22%, #454c54 30%, #5a6872 34%, #7b8ea0 42%, #9db4c8 48%, #7d92a0 54%, #7a8687 62%, #909a98 68%, #8f9a98 72%, #a09488 74%, #c8dce8 79%, #d8ecf4 81%, #8fa2b0 84%, #a8bac4 90%, #c4d4dc 100%);
}
.logo { width: 16px; height: 17px; margin: 3px 0 0 0; }
.titlebar h1 { font: 12px/15px "Open Sans", "Noto Sans", sans-serif; margin: 3px 0 0 5px; }
.winbtns { margin-left: auto; margin-right: 3px; display: flex; height: 18px; border: 1px solid #5d6c76; border-top: 0; border-radius: 0 0 5px 5px; background: #ffffff40; overflow: hidden; }
.winbtns button { width: 27px; border-right: 1px solid #6d7c86; display: grid; place-items: center; }
.winbtns .wide { width: 47px; border: 0; }
.winbtns svg { width: 14px; height: 14px; }

/* menu */
.menubar { height: 22px; flex: none; display: flex; gap: 14px; padding: 2px 7px 0; background: linear-gradient(#fbfcfe 0, #e8ecf6 7px, #d6ddef 8px, #dfe5f4 18px); border-bottom: 1px solid #999; box-shadow: inset 0 -2px #eef0f6, inset 0 -3px #b4bccd; }
.menubar a { font: 12px/16px "Open Sans", "Noto Sans", sans-serif; color: #6d6d6d; text-decoration: none; }

/* toolbars */
.toolbar { height: 32px; flex: none; display: flex; align-items: stretch; border-top: 1px solid #fff; }
.toolbar > button { width: 31px; flex: none; display: grid; place-items: center; padding-bottom: 3px; }
.toolbar > button svg { width: 24px; height: 24px; }
.toolbar .sep { width: 5px; flex: none; background: linear-gradient(#fff, #fff) 3px 0 / 1px 100% no-repeat, linear-gradient(#9c9c9c, #9c9c9c) 2px 0 / 1px 100% no-repeat; }
.grip { width: 8px; flex: none; background: radial-gradient(circle, #bbb 1px, #0000 2px) 0 4px / 6px 5px repeat-y; }
.bmp { font: 700 9px/10px "Liberation Serif", serif; color: #333; }
.fields { height: 34px; border-top: 1px solid #999; box-shadow: inset 0 1px #fff; border-bottom: 1px solid #aaa; }
.fields > button { padding-bottom: 2px; }
.fields > button svg { fill: none; stroke: #111; stroke-width: 1; shape-rendering: crispEdges; }
.fields .grip { width: 8px; }
.fields input { height: 16px; border: 1px solid #b4b4b4; border-radius: 2px; background: #f2f2f2; color: #777; padding: 0 4px; width: 100%; }
.fields span, .fields label { align-self: center; }
.pair { display: grid; grid-template-rows: 16px 16px; align-content: center; align-items: stretch; flex: none; }
.xy { grid-template-columns: 10px 47px 24px; padding-left: 3px; }
.xy span, .size span { padding-left: 2px; }
.size { grid-template-columns: 18px 47px 25px; }
.size .dark { background: #bebebe; align-self: stretch; display: grid; place-items: center; }
.size .dark svg { width: 16px; height: 14px; }
.pct { grid-template-columns: 32px 24px; }
.pct span { padding-left: 5px; }
.locks { display: flex; align-items: center; gap: 2px; padding: 0 3px 2px 0; flex: none; }
.raised { width: 22px; height: 24px; border: 1px solid; border-color: #fff #555 #555 #fff; box-shadow: 1px 1px #444; display: grid; place-items: center; }
.raised.pressed { background: #ccc; }
.raised svg { width: 20px; height: 20px; }
.rot { display: flex; align-items: center; flex: none; padding-left: 10px; width: 195px; }
.rot svg { width: 20px; height: 20px; margin-right: 6px; }
.rot input { height: 20px; width: 38px; padding-left: 5px; }
.rot #proc { width: 42px; }
.rot .deg { align-self: flex-start; padding: 5px 6px 0 1px; }
.rot .faint { color: #999; text-shadow: 1px 1px #fff; padding-top: 4px; width: 61px; white-space: nowrap; }

/* work area */
.work { flex: 1; min-height: 0; display: flex; border-bottom: 1px solid #999; }
.tools { width: 32px; flex: none; display: flex; flex-direction: column; align-items: center; border-right: 1px solid #888; }
.tools .hgrip { height: 9px; width: 22px; flex: none; background: radial-gradient(circle, #bbb 1px, #0000 2px) 0 1px / 5px 6px repeat-x; }
.tools button { width: 31px; height: 31px; flex: none; display: grid; place-items: center; padding-right: 2px; }
.tools svg { width: 24px; height: 24px; }
.tools .on { height: 28px; border: 1px solid #666; border-radius: 4px; background: #eee; box-shadow: inset 0 0 2px #888; }
.tools hr { width: 28px; height: 6px; flex: none; background: linear-gradient(#999, #999) 0 3px / 100% 1px no-repeat; }

.editor { flex: 1; min-width: 0; display: grid; grid-template: 19px minmax(0, 1fr) 17px / 19px minmax(0, 1fr) 19px; background: #f0f0f0; padding-top: 1px; }
.editor svg { width: 100%; height: 100%; display: block; overflow: hidden; }
.corner { background: #fafafa; border-right: 1px solid #777; border-bottom: 2px solid #777; margin-right: 2px; }
.hruler { grid-column: 2 / 4; background: #fafafa; border-left: 1px solid #777; border-bottom: 2px solid #888; }
.vruler { grid-row: 2 / 4; background: #fafafa; border-right: 2px solid #777; }
.canvas { background: #fff; border: 1px solid #000; }
.tick { stroke: #000; shape-rendering: crispEdges; }
.mark { stroke: #000; stroke-width: 2; }
.num { font: 700 12px "DejaVu Sans Condensed", "DejaVu Sans", sans-serif; fill: #333; }
.end { text-anchor: end; }
.grid { stroke: #a8a494; stroke-dasharray: 3 3; shape-rendering: crispEdges; }
.frame { fill: none; stroke: #000; stroke-width: 2; }
.axis { stroke: #00f; stroke-width: 3; }
.head { fill: #00f; }
.vscroll, .hscroll { display: flex; align-items: center; justify-content: space-between; background: #ededed; }
.vscroll { flex-direction: column; padding: 6px 0; }
.hscroll { padding: 1px 6px 0; }
.thumb { border: 1px solid #999; border-radius: 2px; background: linear-gradient(#f6f6f6 50%, #d0d0d4 51%); }
.editor .thumb { width: 15px; height: 15px; }
.vscroll .thumb { margin-bottom: 116px; }
.hscroll .thumb { margin-left: 316px; }
.up, .down, .left, .right { width: 0; height: 0; border: 4px solid transparent; }
.up { border-width: 0 4px 4px; border-bottom-color: #444; }
.down { border-width: 4px 4px 0; border-top-color: #444; }
.left { border-width: 4px 4px 4px 0; border-right-color: #333; }
.right { border-width: 4px 0 4px 4px; border-left-color: #333; }

/* side panels */
.side { width: 296px; flex: none; display: flex; flex-direction: column; justify-content: space-between; border-left: 1px solid #fff; box-shadow: -1px 0 #ccc; }
.dock { padding-left: 4px; }
.dockbar { display: flex; align-items: center; height: 16px; }
.dockbar i { width: 274px; height: 6px; border: solid #999; border-width: 1px 1px 1px 0; background: linear-gradient(#fff, #fff); box-shadow: inset 0 -1px #fff, inset 0 2px #f0f0f0, inset 0 3px #999; }
.dockbar button, .pgrip button { font: 700 12px/12px "DejaVu Sans", sans-serif; width: 18px; height: 14px; text-align: center; }
.tabs { display: flex; align-items: flex-end; height: 20px; }
.tabs button { width: 42px; height: 18px; border: 1px solid #8a8d98; border-bottom: 0; background: linear-gradient(#f4f4f4 50%, #dedede); text-align: left; padding: 1px 0 0 4px; }
.tabs button:nth-child(2) { width: 45px; padding-left: 3px; }
.tabs .on { width: 46px; height: 20px; background: #fff; padding: 0 0 2px 7px; }
.tabs .wide { width: 60px; padding-left: 3px; }
.page { border: 1px solid #8a8d98; border-bottom-width: 2px; border-right-color: #fff; width: 287px; padding: 3px 9px 4px 3px; background: #f0f0f0; }
.listbox { border: 1px solid #828790; background: #fff; padding: 1px; height: 163px; }
.listbox table { border-collapse: collapse; table-layout: fixed; width: 100%; }
.listbox th { height: 23px; font-weight: 400; padding: 0; border-right: 1px solid #e2e4ea; border-bottom: 1px solid #d5d5d5; background: linear-gradient(#fff 40%, #f3f4f6); }
.listbox td { height: 17px; padding: 0; border-right: 1px solid #eee; border-bottom: 1px solid #eee; }
.listbox th:last-child, .listbox td:last-child { border-right: 0; }
.c1 { width: 50px; text-align: left; }
.listbox .c1 { padding-left: 5px; }
.c3 { width: 50px; }
.c4 { width: 45px; }
.lscroll { display: flex; align-items: center; justify-content: space-between; height: 15px; padding: 0 7px 0 5px; background: #f0f0f0; }
.lscroll .thumb { width: 229px; height: 14px; display: grid; place-items: center; }
.lscroll b { width: 7px; height: 6px; background: repeating-linear-gradient(90deg, #666 0 1px, #fff 1px 3px); }
.props { width: 100%; border-collapse: collapse; border: 1px solid #828790; background: #fff; margin-top: 1px; }
.props th { width: 133px; background: #dadada; border: 0; border-bottom: 1px solid #e6e6e6; text-align: left; font-weight: 400; padding: 0 0 0 3px; color: #111820; }
.props td { border-bottom: 1px solid #e2e2e2; padding: 0 3px 0 5px; height: 20px; }
.black { display: block; height: 16px; background: #000; margin-left: -1px; }
.btn { border: 1px solid #707070; border-radius: 3px; height: 21px; background: linear-gradient(#f4f4f4, #ebebeb 50%, #dcdcdc 51%, #cfcfcf); box-shadow: inset 0 0 0 1px #fcfcfc; white-space: nowrap; }
.btn:disabled { color: #838383; border-color: #b4b8bc; background: #f4f4f4; }
.lasers { display: flex; gap: 2px; padding: 4px 3px 3px; }
.lasers .btn { width: 39px; height: 20px; }
.lasers .btn + .btn { width: 43px; }
fieldset { position: relative; border: 1px solid #d5dfe5; border-radius: 3px; box-shadow: inset 0 0 0 1px #fff; min-width: 0; }
legend { margin-left: 5px; padding: 0 2px; }
.setup { width: 273px; height: 106px; }
.setgrid { display: grid; grid-template-columns: 17px 38px 60px 60px 63px; grid-template-rows: 16px 20px 20px; gap: 1px 3px; padding-left: 6px; text-align: center; }
.setgrid > label { align-self: end; text-align: left; }
.setgrid > input { width: 100%; border: 1px solid #b4b4b4; border-radius: 2px; background: #f2f2f2; color: #777; padding: 0 5px; }
.mirror { grid-row: 2 / 4; grid-column: 5; border: 1px solid #777; display: grid; grid-template-columns: 1fr 1fr; padding-left: 4px; align-items: center; color: #888; }
.mirror label { display: flex; gap: 2px; }
input[type=checkbox] { appearance: none; width: 13px; height: 13px; flex: none; border: 1px solid #8e8f8f; background: linear-gradient(135deg, #d0d4da, #fff) content-box #f4f4f4; padding: 1px; display: flex; justify-content: center; align-items: flex-start; }
input[type=checkbox]:disabled { border-color: #b8b8b8; background: #fafafa; }
input[type=checkbox]:checked::after { content: ""; flex: none; width: 5px; height: 8px; border: solid #3a5a9c; border-width: 0 2px 2px 0; transform: rotate(40deg); }
.arr { display: flex; align-items: center; padding: 0 3px 0 2px; gap: 4px; }
.arricon { width: 30px; height: 33px; border: 1px solid #000; background: #ddd; flex: none; }
.arricon svg { width: 28px; height: 31px; display: block; }
.arr .btn { height: 24px; width: 79px; }
.arr .b { width: 73px; }
.arr .a { width: 67px; margin-left: 2px; }

.second { border-top: 1px solid #999; box-shadow: inset 0 1px #fff; height: 236px; }
.second fieldset { width: 287px; margin-left: 1px; }
.second .dockbar { height: 17px; }
.lw { height: 151px; }
.lwgrid { display: grid; grid-template-columns: 90px 99px 70px; gap: 4px 3px; padding: 3px 0 0 9px; }
.sel { position: relative; display: block; }
.sel select { appearance: none; width: 100%; height: 21px; display: block; border: 1px solid #707070; border-radius: 3px; padding: 0 14px 0 3px; background: linear-gradient(#f4f4f4, #ebebeb 50%, #dcdcdc 51%, #cfcfcf); box-shadow: inset 0 0 0 1px #fcfcfc; }
.sel::after { content: ""; position: absolute; right: 5px; top: 9px; border: 4px solid transparent; border-top-color: #000; border-bottom: 0; pointer-events: none; }
.posrow { display: flex; justify-content: flex-end; align-items: flex-end; gap: 5px; padding: 5px 8px 0 0; }
.posrow label { line-height: 12px; }
.posrow .sel { width: 173px; }
.optrow { display: flex; justify-content: space-between; padding: 11px 11px 0 8px; }
.checks { display: flex; flex-direction: column; gap: 1px; }
.checks label { display: flex; align-items: center; gap: 3px; height: 14px; white-space: nowrap; }
.checks .off { padding-left: 17px; color: #838383; margin-top: 3px; }
.scales { display: grid; gap: 4px; width: 70px; align-content: start; }
.dev { height: 48px; margin-top: 5px; }
.devrow { display: flex; gap: 5px; padding: 6px 0 0 8px; }
.devrow .btn { width: 91px; }
.devrow .sel { width: 173px; }

/* palette and status */
.palette { height: 35px; flex: none; display: flex; border-bottom: 1px solid #999; padding-top: 4px; border-top: 1px solid #fff; }
.pgrip { width: 20px; flex: none; display: flex; flex-direction: column; align-items: center; gap: 2px; padding-right: 6px; }
.pgrip i { width: 6px; height: 8px; border: solid #bbb; border-width: 0 1px 1px; }
.swatches { display: grid; grid-template-columns: repeat(20, minmax(0, 1fr)); width: 507px; height: 25px; gap: 2px; }
.swatches button { border: solid #999; border-width: 1px 0 0 1px; box-shadow: 1px 0 #aaa; }
.k0 { background: #000; } .k1 { background: #00f; } .k2 { background: #f00; } .k3 { background: #0f0; }
.k4 { background: #fa8072; } .k5 { background: #ff0; } .k6 { background: #1e90ff; } .k7 { background: #8b3610; }
.k8 { background: #808000; } .k9 { background: #008060; } .k10 { background: #ff4500; } .k11 { background: #400080; }
.k12 { background: #ffd0d8; } .k13 { background: #b0a0f8; } .k14 { background: #d8f8a0; } .k15 { background: #fc9058; }
.k16 { background: #db7498; } .k17 { background: #8870dc; } .k18 { background: #78dc78; } .k19 { background: #b4a074; }
.status { height: 20px; flex: none; display: flex; gap: 2px; padding-top: 1px; border-bottom: 1px solid #8a9490; font: 12px/17px "Open Sans", "Noto Sans", sans-serif; }
.status span { border: 1px solid #999; background: #f1edeb; padding-left: 2px; white-space: nowrap; overflow: hidden; }
.msg { flex: 1; }
.s2 { width: 21px; } .s3 { width: 10px; } .s4 { width: 180px; } .s5 { width: 189px; }

/* task bar */
.taskbar { height: 40px; flex: none; display: flex; background: radial-gradient(ellipse 16px 10px at 612px 8px, #6f879a 0, #6f879a00), linear-gradient(#9fb2bd55 0, #0000 3px), linear-gradient(95deg, #46525c, #35434f 15%, #2d3944 30%, #44525e 42%, #33404c 52%, #26303a 62%, #2c3b48 72%, #25313c 80%, #2e3e4c 88%, #1f2a34); }
.taskbar > button { width: 60px; margin-right: 2px; display: grid; place-items: center; }
.taskbar > button svg { width: 32px; height: 32px; }
.taskbar .orb { width: 54px; margin-right: 5px; }
.taskbar .orb svg { width: 40px; height: 40px; }
.taskbar .on { border: 1px solid #b8c0c4; border-radius: 3px; background: linear-gradient(125deg, #c8d0d4a0 0, #90989c80 45%, #60707c80 46%, #8090a080); box-shadow: inset 0 0 2px #fff; }
.taskbar .bright { background: linear-gradient(125deg, #e4e6e8, #b8bcbe 45%, #8e9294 46%, #b4b8ba); }
.pro { font: 700 6px "DejaVu Sans Condensed", sans-serif; fill: #fff; text-anchor: middle; }
.sk { font: 700 23px "Open Sans", sans-serif; fill: #fff; text-anchor: middle; }
.tray { margin-left: auto; display: flex; align-items: center; color: #fff; font: 12px/17px "Open Sans", "Noto Sans", sans-serif; }
.tray .lang { margin: 0 16px 4px 0; }
.tray svg { width: 10px; height: 10px; margin-right: 10px; }
.tray .t { width: 16px; height: 16px; margin-right: 8px; }
.clock { width: 76px; display: flex; flex-direction: column; align-items: center; padding-top: 3px; }
.peek { width: 14px; height: 40px; margin-left: 1px; border: 1px solid #7d8890; background: linear-gradient(120deg, #707c86, #2c3842); }

/* dialog */
.dialog { position: absolute; left: calc(50% - 142px); top: 367px; width: 285px; border: 1px solid #1c242c; border-radius: 6px; padding: 0 6px 5px; background: linear-gradient(100deg, #dcebf8 0, #c4dcf4 30%, #b4d2f0 60%, #c8e0f8 80%, #b4d4f4); box-shadow: inset 0 0 0 1px #fff, 2px 4px 12px 2px #000000b0; }
.dtitle { display: flex; justify-content: space-between; height: 29px; }
.dtitle h2 { font: 12px/16px "Open Sans", "Noto Sans", sans-serif; padding: 6px 0 0 1px; }
.dclose { width: 47px; height: 19px; border: 1px solid #5a2020; border-top: 0; border-radius: 0 0 5px 5px; background: linear-gradient(#e0a89c, #cc7060 50%, #a82c1c 51%, #c85848); display: grid; place-items: center; }
.dclose svg { width: 12px; height: 11px; }
.dbody { border: 1px solid #5c6c78; background: #f0f0f0; height: 241px; padding: 7px 5px 0 4px; }
.dbody label { display: flex; align-items: center; gap: 2px; height: 14px; white-space: nowrap; }
.order { padding-left: 7px; }
.g1 { height: 60px; margin-top: 9px; padding: 6px 0 0 6px; }
.g1 .sel { width: 210px; margin: 8px 0 0 18px; }
.g2 { height: 46px; margin-top: 5px; }
.g2 legend { margin-left: 4px; }
.hrow { display: flex; align-items: center; padding: 2px 9px 0 13px; }
.hrow label { width: 42px; }
.hrow input { width: 60px; height: 23px; border: 1px solid #e0e4ea; background: #fff; padding: 0 5px 3px; }
.hrow .dir { margin-left: auto; width: 24px; }
.hrow .sel { width: 72px; }
.g3 { height: 50px; margin-top: 8px; padding: 8px 0 0 6px; }
.g3 label + label { margin-top: 2px; }
.dbtns { display: flex; justify-content: center; gap: 29px; padding: 10px 0 0 0; }
.dbtns .btn { width: 73px; }
.dbtns .ok { border-color: #3c7fb1; box-shadow: inset 0 0 0 1px #48c8f0; background: linear-gradient(#eef4f6, #e4eef2 50%, #cfdde2 51%, #c4d8e0); }
.redarrow { position: absolute; left: -33px; top: 147px; width: 64px; height: 28px; }
```
